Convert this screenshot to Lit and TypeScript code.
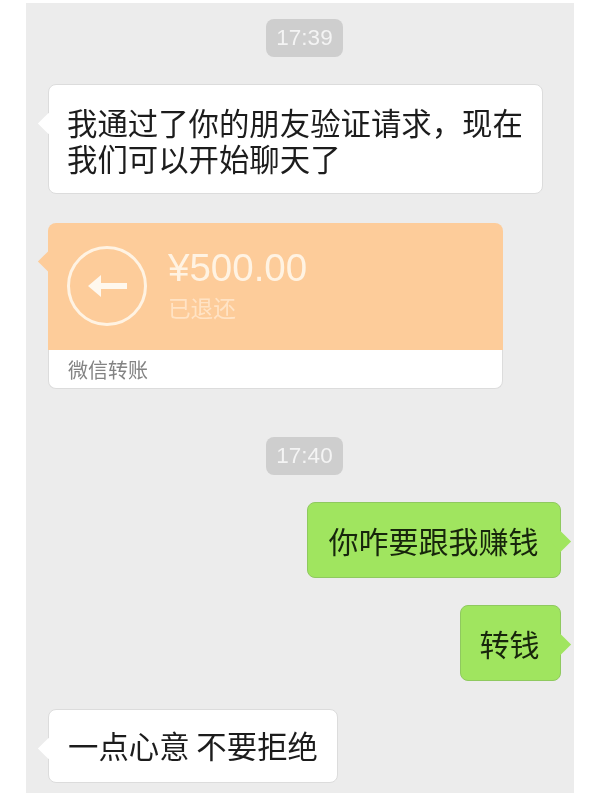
import { css, html, LitElement } from "lit";
import { customElement } from "lit/decorators.js";

@customElement("app-root")
export class AppRoot extends LitElement {
  render() {
    return html`
      <main class="chat">
        <div class="time first">17:39</div>

        <div class="row left intro">
          <div class="bubble white wide">我通过了你的朋友验证请求，现在<br />我们可以开始聊天了</div>
        </div>

        <div class="row left transfer">
          <div class="card">
            <div class="card-top">
              <svg class="refund" width="84" height="84" viewBox="0 0 84 84" aria-hidden="true">
                <circle cx="42" cy="42" r="38.5" fill="none" stroke="#fff3e3" stroke-width="3" />
                <path d="M23 42 L36 31 V39 H62 V45 H36 V53 Z" fill="#fff8ee" />
              </svg>
              <div class="amount-block">
                <div class="amount">¥500.00</div>
                <div class="status">已退还</div>
              </div>
            </div>
            <div class="card-foot">微信转账</div>
          </div>
        </div>

        <div class="time second">17:40</div>

        <div class="row right ask">
          <div class="bubble green">你咋要跟我赚钱</div>
        </div>
        <div class="row right send">
          <div class="bubble green short">转钱</div>
        </div>

        <div class="row left last">
          <div class="bubble white">一点心意 不要拒绝</div>
        </div>
      </main>
    `;
  }

  static styles = css`
    :host {
      display: block;
      width: 600px;
      height: 793px;
      overflow: hidden;
      background: #fff;
      font-family: "Noto Sans CJK SC", "Liberation Sans", sans-serif;
    }

    .chat {
      box-sizing: border-box;
      display: flex;
      flex-direction: column;
      width: 548px;
      height: 790px;
      margin: 3px 0 0 26px;
      padding: 16px 13px 0 22px;
      background: #ececec;
      filter: blur(0.4px);
    }

    .time {
      align-self: center;
      width: 77px;
      height: 38px;
      border-radius: 8px;
      background: #cecece;
      color: #f4f4f4;
      font-family: "Liberation Sans", sans-serif;
      font-size: 22.5px;
      line-height: 38px;
      text-align: center;
    }

    .row {
      display: flex;
    }

    .row.right {
      justify-content: flex-end;
    }

    .intro {
      margin-top: 27px;
    }

    .transfer {
      margin-top: 29px;
    }

    .second {
      margin-top: 48px;
    }

    .ask {
      margin-top: 27px;
    }

    .send {
      margin-top: 27px;
    }

    .last {
      margin-top: 28px;
    }

    .bubble {
      position: relative;
      box-sizing: border-box;
      border-radius: 8px;
      font-size: 30.4px;
      line-height: 37px;
      color: #1c1c1c;
      white-space: nowrap;
    }

    .bubble::before,
    .card::before {
      content: "";
      position: absolute;
      top: 31px;
      width: 15px;
      height: 15px;
      transform: rotate(45deg);
    }

    .white {
      padding: 17px 19px 18px 19px;
      border: 1px solid #dcdcdc;
      background: #fff;
    }

    .white::before {
      left: -8px;
      background: #fff;
    }

    .wide {
      width: 495px;
      padding: 19px 18px 17px;
      line-height: 36px;
    }

    .green {
      padding: 18px 21.5px 18px 20.5px;
      border: 1px solid #8fc95f;
      background: #a0e55f;
      color: #17260c;
      font-size: 30px;
      line-height: 38px;
    }

    .short {
      padding: 18px 20.5px 18px 18.5px;
    }

    .green::before {
      right: -8px;
      background: #a0e55f;
    }

    .card {
      position: relative;
      width: 455px;
      border-radius: 8px;
    }

    .card::before {
      left: -7px;
      background: #fdcc9a;
    }

    .card-top {
      position: relative;
      display: flex;
      align-items: flex-start;
      gap: 19px;
      box-sizing: border-box;
      height: 127px;
      padding: 21px 0 0 17px;
      border-radius: 8px 8px 0 0;
      background: #fdcc9a;
    }

    .amount-block {
      margin-top: 2px;
    }

    .amount {
      color: #fff3e3;
      font-family: "Liberation Sans", sans-serif;
      font-size: 38.5px;
      line-height: 44px;
    }

    .status {
      margin-top: 3px;
      color: #ffe3c5;
      font-size: 22.6px;
      line-height: 30px;
    }

    .card-foot {
      box-sizing: border-box;
      height: 39px;
      padding-left: 19px;
      border: 1px solid #dcdcdc;
      border-top: none;
      border-radius: 0 0 8px 8px;
      background: #fff;
      color: #838383;
      font-size: 20px;
      line-height: 39px;
    }
  `;
}

declare global {
  interface HTMLElementTagNameMap {
    "app-root": AppRoot;
  }
}
